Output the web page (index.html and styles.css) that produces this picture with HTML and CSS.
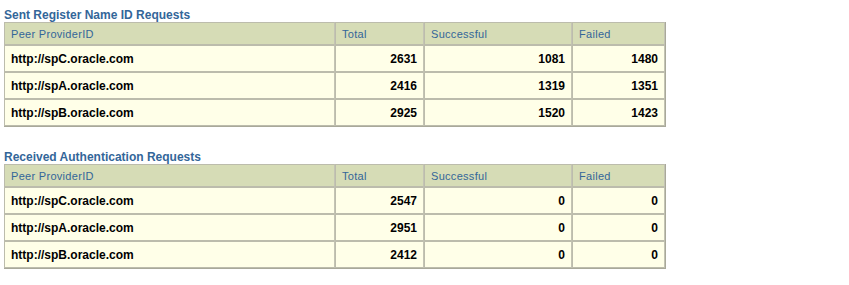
FILE: index.html
```html
<!DOCTYPE html>
<html>
<head>
<meta charset="utf-8">
<link rel="stylesheet" href="styles.css">
</head>
<body>
<section class="block">
  <h2 class="title">Sent Register Name ID Requests</h2>
  <table class="grid">
    <colgroup><col class="c1"><col class="c2"><col class="c3"><col class="c4"></colgroup>
    <thead>
      <tr><th>Peer ProviderID</th><th>Total</th><th>Successful</th><th>Failed</th></tr>
    </thead>
    <tbody>
      <tr><td>http://spC.oracle.com</td><td class="num">2631</td><td class="num">1081</td><td class="num">1480</td></tr>
      <tr><td>http://spA.oracle.com</td><td class="num">2416</td><td class="num">1319</td><td class="num">1351</td></tr>
      <tr><td>http://spB.oracle.com</td><td class="num">2925</td><td class="num">1520</td><td class="num">1423</td></tr>
    </tbody>
  </table>
</section>
<section class="block second">
  <h2 class="title">Received Authentication Requests</h2>
  <table class="grid">
    <colgroup><col class="c1"><col class="c2"><col class="c3"><col class="c4"></colgroup>
    <thead>
      <tr><th>Peer ProviderID</th><th>Total</th><th>Successful</th><th>Failed</th></tr>
    </thead>
    <tbody>
      <tr><td>http://spC.oracle.com</td><td class="num">2547</td><td class="num">0</td><td class="num">0</td></tr>
      <tr><td>http://spA.oracle.com</td><td class="num">2951</td><td class="num">0</td><td class="num">0</td></tr>
      <tr><td>http://spB.oracle.com</td><td class="num">2412</td><td class="num">0</td><td class="num">0</td></tr>
    </tbody>
  </table>
</section>
</body>
</html>
```
FILE: styles.css
```css
html, body {
  margin: 0;
  padding: 0;
  background: #ffffff;
}
body {
  padding: 8px 4px 0 4px;
  font-family: "Liberation Sans", Arial, sans-serif;
}
.block.second {
  margin-top: 23px;
}
.title {
  margin: 0;
  font-size: 12px;
  line-height: 14px;
  font-weight: bold;
  color: #336699;
}
.grid {
  border-collapse: separate;
  border-spacing: 0;
  table-layout: fixed;
  width: 661px;
  border-right: 1px solid #a9a99a;
  border-bottom: 1px solid #a9a99a;
}
.c1 { width: 331px; }
.c2 { width: 89px; }
.c3 { width: 148px; }
.c4 { width: 93px; }
.grid th, .grid td {
  border: 1px solid #bcbcac;
  border-right-color: #c4c4b4;
  padding: 0 6px;
  text-align: left;
}
.grid th {
  height: 21px;
  box-sizing: border-box;
  background: #d6dcb6;
  color: #336699;
  font-weight: normal;
  font-size: 11px;
  letter-spacing: 0.3px;
  padding-left: 6px;
}
.grid thead th { height: 23px; }
.grid td {
  height: 27px;
  box-sizing: border-box;
  background: #ffffe8;
  color: #000000;
  font-weight: bold;
  font-size: 12px;
}
.grid td.num {
  text-align: right;
}
```
